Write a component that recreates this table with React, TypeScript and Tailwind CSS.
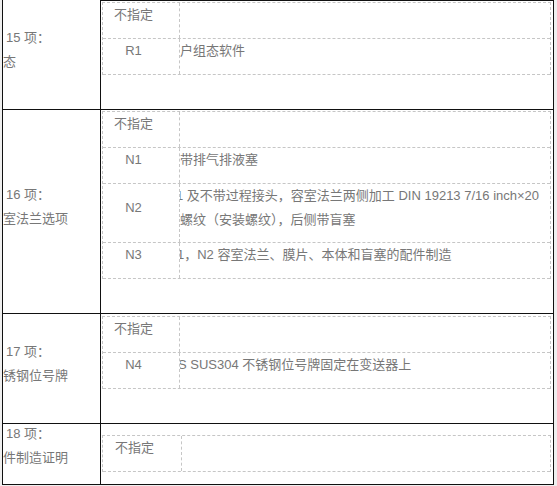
import React from 'react';

interface SubRow {
  code: string;
  lines: string[];
  shift?: string;
  height: string;
  labelPad?: string;
}

interface Section {
  title: string;
  name: string;
  height: string;
  innerTop: string;
  textTop: string;
  labelCol: string;
  rows: SubRow[];
}

const sections: Section[] = [
  {
    title: '15 项：',
    name: '态',
    height: 'h-[110px]',
    innerTop: 'mt-[1px]',
    textTop: 'pt-[26px]',
    labelCol: 'grid-cols-[77px_1fr]',
    rows: [
      { code: '不指定', lines: [], height: 'h-[36px]' },
      { code: 'R1', lines: ['户组态软件'], height: 'h-[36px]' },
    ],
  },
  {
    title: '16 项：',
    name: '室法兰选项',
    height: 'h-[204px]',
    innerTop: 'mt-[1px]',
    textTop: 'pt-[73px]',
    labelCol: 'grid-cols-[77px_1fr]',
    rows: [
      { code: '不指定', lines: [], height: 'h-[36px]' },
      { code: 'N1', lines: ['带排气排液塞'], height: 'h-[36px]' },
      {
        code: 'N2',
        lines: ['1 及不带过程接头，容室法兰两侧加工 DIN 19213 7/16 inch×20', '螺纹（安装螺纹），后侧带盲塞'],
        shift: 'ml-[-4px]',
        height: 'h-[59px]',
        labelPad: 'pt-[12px]',
      },
      { code: 'N3', lines: ['1，N2 容室法兰、膜片、本体和盲塞的配件制造'], shift: 'ml-[-3px]', height: 'h-[36px]' },
    ],
  },
  {
    title: '17 项：',
    name: '锈钢位号牌',
    height: 'h-[110px]',
    innerTop: 'mt-[2px]',
    textTop: 'pt-[26px]',
    labelCol: 'grid-cols-[77px_1fr]',
    rows: [
      { code: '不指定', lines: [], height: 'h-[36px]' },
      { code: 'N4', lines: ['S SUS304 不锈钢位号牌固定在变送器上'], shift: 'ml-[-2px]', height: 'h-[36px]' },
    ],
  },
  {
    title: '18 项：',
    name: '件制造证明',
    height: 'h-[60px]',
    innerTop: 'mt-[11px]',
    textTop: 'mt-[-2px]',
    labelCol: 'grid-cols-[79px_1fr]',
    rows: [{ code: '不指定', lines: [], height: 'h-[36px]' }],
  },
];

const App: React.FC = () => {
  return (
    <div className="w-[557px] h-[486px] overflow-hidden bg-[#efefef] font-['Liberation_Sans','Noto_Sans_CJK_SC',sans-serif] text-[13px] leading-[24px] text-[#777]">
      <div className="ml-[2px] w-[552px] bg-white border-x border-b border-[#111]">
        {sections.map((s, i) => (
          <div
            key={s.title}
            className={`grid grid-cols-[98px_1fr] ${s.height} ${i < sections.length - 1 ? 'border-b border-[#111]' : ''}`}
          >
            {/* left: item title */}
            <div className="border-r border-[#111] overflow-hidden whitespace-nowrap">
              <div className={s.textTop}>
                <div className="pl-[3px]">{s.title}</div>
                <div>{s.name}</div>
              </div>
            </div>

            {/* right: option sub-table */}
            <div className={i === 0 ? 'border-t border-[#111]' : ''}>
              <div className={`ml-[1px] ${s.innerTop} w-[449px] border-x border-t border-dashed border-[#c6c6c6]`}>
                {s.rows.map((r) => (
                  <div
                    key={r.code}
                    className={`grid ${s.labelCol} ${r.height} border-b border-dashed border-[#c6c6c6]`}
                  >
                    <div className={`border-r border-dashed border-[#c6c6c6] text-center pr-[15px] ${r.labelPad ?? ''}`}>
                      {r.code}
                    </div>
                    <div className="overflow-hidden whitespace-nowrap">
                      {r.lines.map((l, j) => (
                        <div key={l} className={j === 0 ? r.shift ?? '' : ''}>
                          {l}
                        </div>
                      ))}
                    </div>
                  </div>
                ))}
              </div>
            </div>
          </div>
        ))}
      </div>
    </div>
  );
};

export default App;
